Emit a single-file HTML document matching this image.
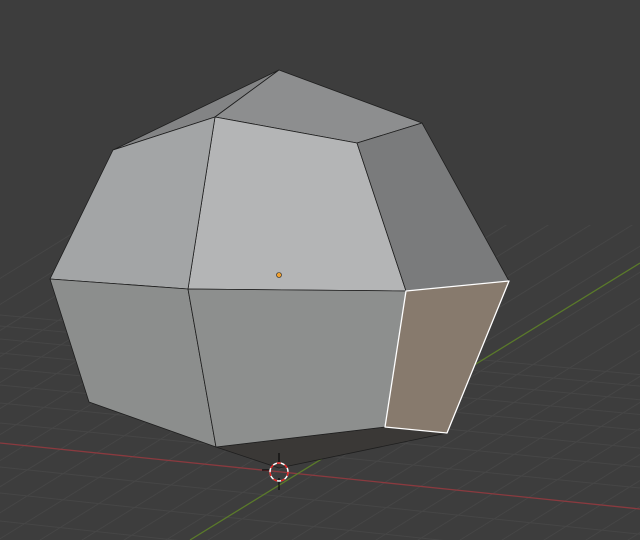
<!DOCTYPE html>
<html><head><style>
html,body{margin:0;padding:0;background:#3d3d3d;width:640px;height:540px;overflow:hidden}
svg{display:block}
</style></head><body>
<svg id="s" width="640" height="540" viewBox="0 0 640 540" xmlns="http://www.w3.org/2000/svg">
<rect width="640" height="540" fill="#3d3d3d"/>
<defs><clipPath id="c"><rect x="0" y="225" width="640" height="315"/></clipPath></defs>
<g id="grid" clip-path="url(#c)" stroke="#464646" stroke-width="1" fill="none"></g>
<line x1="0" y1="443" x2="640" y2="509" stroke="#8a3a3f" stroke-width="1.3"/>
<line x1="190" y1="540" x2="640" y2="263" stroke="#5a7a2a" stroke-width="1.3"/>
<g stroke="#1e1e1e" stroke-width="0.8" stroke-linejoin="round">
<polygon points="216,447 385,427 447,433 279,468" fill="#3a3836"/>
<polygon points="279,70 215,117 113,150" fill="#838485"/>
<polygon points="279,70 422,123 357,143 215,117" fill="#8d8e8f"/>
<polygon points="215,117 357,143 406,291 188,289" fill="#b4b5b6"/>
<polygon points="113,150 215,117 188,289 50,279" fill="#a3a5a6"/>
<polygon points="357,143 422,123 509,281 406,291" fill="#7a7b7c"/>
<polygon points="50,279 188,289 216,447 89,402" fill="#8c8e8d"/>
<polygon points="188,289 406,291 385,427 216,447" fill="#8d8f8e"/>
</g>
<polygon points="406,291 509,281 447,433 385,427" fill="#877a6d" stroke="#ffffff" stroke-width="1.3" stroke-linejoin="round"/>
<circle cx="279" cy="275" r="2.5" fill="#f0a030" stroke="#222" stroke-width="0.6"/>
<line x1="279" y1="453" x2="279" y2="462" stroke="#000" stroke-width="1"/>
<line x1="279" y1="478" x2="279" y2="490" stroke="#000" stroke-width="1"/>
<line x1="262" y1="470" x2="269" y2="470" stroke="#000" stroke-width="1"/>
<circle cx="279" cy="472" r="9" fill="none" stroke="#ffffff" stroke-width="1.5"/>
<circle cx="279" cy="472" r="9" fill="none" stroke="#e02020" stroke-width="1.5" stroke-dasharray="4 4"/>
</svg>
<script>
var g=document.getElementById('grid'),ns='http://www.w3.org/2000/svg';
function L(x1,y1,x2,y2){var l=document.createElementNS(ns,'line');l.setAttribute('x1',x1);l.setAttribute('y1',y1);l.setAttribute('x2',x2);l.setAttribute('y2',y2);g.appendChild(l);}
var offs=[-128,-117,-104,-90,-75,-58,-40,-20,24,50,78,106];
offs.forEach(function(o){L(0,443+o,640,509+o*1.05);});
for(var k=-14;k<=14;k++){var x=279+k*42;L(x-500,470+310,x+500,470-310);}
</script>
</body></html>
